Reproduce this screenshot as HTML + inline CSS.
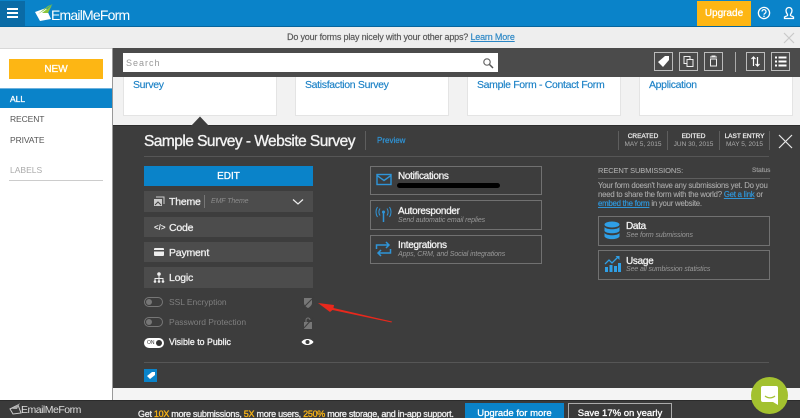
<!DOCTYPE html>
<html><head><meta charset="utf-8">
<style>
html,body{margin:0;padding:0}
body{width:800px;height:418px;overflow:hidden;position:relative;background:#fff;font-family:"Liberation Sans",sans-serif}
.a{position:absolute;white-space:nowrap}
.w{-webkit-text-stroke:.3px currentColor}
.card{position:absolute;top:77px;height:38px;background:#fff;border:1px solid #e4e4e4;border-top:none;color:#1b81c6;font-size:10.5px;letter-spacing:-.33px;line-height:14px;white-space:nowrap}
.card span{position:absolute;top:1px;left:9px;-webkit-text-stroke:.15px currentColor}
.row{position:absolute;left:144px;width:169px;background:#4c4c4c;color:#eee;font-size:10.5px;letter-spacing:-.2px}
.row b{position:absolute;left:25px;top:0;font-weight:normal;-webkit-text-stroke:.3px currentColor}
.box{position:absolute;border:1px solid #717171;box-sizing:border-box;background:#3d3d3d}
.box .t{position:absolute;color:#f2f2f2;font-size:10px;letter-spacing:-.3px;-webkit-text-stroke:.3px currentColor;white-space:nowrap}
.box .s{position:absolute;color:#999;font-size:7px;letter-spacing:-.1px;font-style:italic;white-space:nowrap}
.tb{position:absolute;top:52px;width:19px;height:19px;border:1px solid #bbb;box-sizing:border-box;background:#4a4a4a}
.hd{position:absolute;top:133px;color:#eee;font-size:6.5px;-webkit-text-stroke:.25px currentColor;text-align:center;line-height:8px}
.hd i{display:block;font-style:normal;color:#aaa;-webkit-text-stroke:0;margin-top:0}
.sep{position:absolute;background:#5e5e5e;width:1px}
</style></head><body>
<!-- top bar -->
<div class="a" style="left:0;top:0;width:800px;height:26px;background:#0a83c9;border-bottom:1px solid #07659d;box-sizing:content-box"></div>
<div class="a" style="left:0;top:1px;width:25px;height:25px;background:#0a6ba6"></div>
<div class="a" style="left:7px;top:8px;width:11px;height:2px;background:#fff"></div>
<div class="a" style="left:7px;top:12px;width:11px;height:2px;background:#fff"></div>
<div class="a" style="left:7px;top:16px;width:11px;height:2px;background:#fff"></div>
<svg class="a" style="left:34px;top:4px" width="19" height="18" viewBox="0 0 19 18"><path d="M1 8 L12 4 L17 15 L6 17 Z" fill="#fff"/><path d="M4 10 L9 7 L19 0 L14 2Z" fill="#7fc241"/><path d="M8 9 L18 1 L14 9Z" fill="#8cc63f"/></svg>
<div class="a" style="left:51px;top:6px;color:#fff;font-size:14px;letter-spacing:-.8px;line-height:18px">EmailMeForm</div>
<div class="a w" style="left:697px;top:1px;width:54px;height:25px;background:#fdb614;color:#fff;font-size:10px;text-align:center;line-height:26px">Upgrade</div>
<svg class="a" style="left:756px;top:5px" width="40" height="16" viewBox="0 0 40 16"><circle cx="8" cy="8" r="5.6" fill="none" stroke="#fff" stroke-width="1.3"/><path d="M6 6.500a2 2 0 1 1 3 1.800c-.7.4-1 .8-1 1.400" fill="none" stroke="#fff" stroke-width="1.200"/><circle cx="8" cy="11.300" r=".8" fill="#fff"/><path d="M33 2.500a3 3 0 0 1 3 3c0 2-1 3-1.500 4v1l3 1.500v1.500h-9v-1.500l3-1.500v-1c-.5-1-1.500-2-1.500-4a3 3 0 0 1 3-3z" fill="none" stroke="#fff" stroke-width="1.300"/></svg>
<!-- notice -->
<div class="a" style="left:0;top:27px;width:800px;height:21px;background:#eee;border-bottom:1px solid #d8d8d8"></div>
<div class="a" style="left:287px;top:31px;color:#555;font-size:9px;letter-spacing:-.18px;-webkit-text-stroke:.15px #555;line-height:13px">Do your forms play nicely with your other apps? <span style="color:#2a86c5;-webkit-text-stroke:.15px #2a86c5;text-decoration:underline">Learn More</span></div>
<svg class="a" style="left:783px;top:32px" width="12" height="12"><path d="M1 1L11 11M11 1L1 11" stroke="#c9c9c9" stroke-width="1.200"/></svg>
<!-- sidebar -->
<div class="a w" style="left:9px;top:59px;width:94px;height:20px;background:#fdb614;color:#fff;font-size:10px;text-align:center;line-height:21px">NEW</div>
<div class="a w" style="left:0;top:88px;width:112px;height:20px;background:#0a83c9;border-top:1px solid #6db1dd;box-sizing:border-box;color:#fff;font-size:8.500px;line-height:20px;padding-left:10px">ALL</div>
<div class="a" style="left:10px;top:113px;color:#555;font-size:8.500px;letter-spacing:-.1px;line-height:12px">RECENT</div>
<div class="a" style="left:10px;top:134px;color:#555;font-size:8.500px;letter-spacing:-.1px;line-height:12px">PRIVATE</div>
<div class="a" style="left:10px;top:164px;color:#aaa;font-size:8.500px;line-height:12px">LABELS</div>
<div class="a" style="left:9px;top:180px;width:94px;height:1px;background:#ccc"></div>
<div class="a" style="left:112px;top:48px;width:1px;height:353px;background:#999"></div>
<!-- main bg -->
<div class="a" style="left:113px;top:77px;width:687px;height:48px;background:#f2f2f2"></div>
<div class="card" style="left:123px;width:152px"><span>Survey</span></div>
<div class="card" style="left:295px;width:152px"><span>Satisfaction Survey</span></div>
<div class="card" style="left:467px;width:152px"><span>Sample Form - Contact Form</span></div>
<div class="card" style="left:639px;width:152px"><span>Application</span></div>
<!-- toolbar -->
<div class="a" style="left:113px;top:48px;width:687px;height:29px;background:#4b4b4b"></div>
<div class="a" style="left:123px;top:53px;width:375px;height:19px;background:#fff;box-sizing:border-box;color:#999;font-size:9px;letter-spacing:1px;line-height:21px;padding-left:3px">Search</div>
<svg class="a" style="left:482px;top:57px" width="12" height="12"><circle cx="5" cy="5" r="3.200" fill="none" stroke="#666" stroke-width="1.200"/><path d="M7.500 7.500L11 11" stroke="#555" stroke-width="1.500"/></svg>
<div class="tb" style="left:654px"><svg width="17" height="17"><path d="M3 9L10 3H14V7L8 14Z" fill="#fff"/></svg></div>
<div class="tb" style="left:679px"><svg width="17" height="17"><rect x="4" y="3.500" width="6" height="7" fill="none" stroke="#eee"/><rect x="7" y="6.500" width="6" height="7" fill="#4a4a4a" stroke="#eee"/></svg></div>
<div class="tb" style="left:704px"><svg width="17" height="17"><path d="M5 4h7M7 4V3h3v1M5.500 6h6v7h-6z" fill="none" stroke="#eee"/></svg></div>
<div class="a" style="left:735px;top:52px;width:1px;height:20px;background:#aaa"></div>
<div class="tb" style="left:746px"><svg width="17" height="17"><path d="M6.500 4v9M4.500 6l2-2 2 2M10.500 4v9M8.500 11l2 2 2-2" fill="none" stroke="#fff" stroke-width="1.200"/></svg></div>
<div class="tb" style="left:771px"><svg width="17" height="17"><path d="M3 4.500h2M3 8.500h2M3 12.500h2M6.500 4.500h8M6.500 8.500h8M6.500 12.500h8" stroke="#fff" stroke-width="2"/></svg></div>
<!-- dark panel -->
<div class="a" style="left:113px;top:125px;width:687px;height:263px;background:#3d3d3d;border-top:1px solid #2e2e2e;box-sizing:border-box"></div>
<svg class="a" style="left:189px;top:115px" width="22" height="11"><path d="M2 11L11 1.500L20 11Z" fill="#3d3d3d"/></svg>
<div class="a" style="left:144px;top:132px;color:#f2f2f2;font-size:15.500px;-webkit-text-stroke:.35px #f2f2f2;letter-spacing:-.54px;line-height:20px">Sample Survey - Website Survey</div>
<div class="sep" style="left:365px;top:131px;height:19px"></div>
<div class="a" style="left:377px;top:135px;color:#2f95d8;font-size:8px;-webkit-text-stroke:.2px #2f95d8;line-height:11px">Preview</div>
<div class="a" style="left:144px;top:156px;width:625px;height:1px;background:#565656"></div>
<div class="sep" style="left:618px;top:131px;height:19px"></div>
<div class="sep" style="left:667px;top:131px;height:19px"></div>
<div class="sep" style="left:719px;top:131px;height:19px"></div>
<div class="sep" style="left:769px;top:131px;height:19px"></div>
<div class="hd" style="left:619px;width:48px">CREATED<i>MAY 5, 2015</i></div>
<div class="hd" style="left:668px;width:51px">EDITED<i>JUN 30, 2015</i></div>
<div class="hd" style="left:720px;width:49px">LAST ENTRY<i>MAY 5, 2015</i></div>
<svg class="a" style="left:778px;top:134px" width="15" height="15"><path d="M1 1L14 14M14 1L1 14" stroke="#e8e8e8" stroke-width="1.200"/></svg>
<!-- left col -->
<div class="a w" style="left:144px;top:166px;width:169px;height:20px;background:#0a83c9;color:#fff;font-size:10px;text-align:center;line-height:21px">EDIT</div>
<div class="row" style="top:191px;height:21px;line-height:22px"><b>Theme</b></div>
<div class="a" style="left:204px;top:195px;width:1px;height:13px;background:#777"></div>
<div class="a" style="left:211px;top:197px;color:#8c8c8c;font-size:7px;letter-spacing:-.1px;font-style:italic;line-height:10px">EMF Theme</div>
<svg class="a" style="left:292px;top:198px" width="12" height="8"><path d="M1 1.500L6 6L11 1.500" fill="none" stroke="#eee" stroke-width="1.200"/></svg>
<div class="row" style="top:217px;height:20px;line-height:22px"><b>Code</b></div>
<div class="row" style="top:242px;height:20px;line-height:22px"><b>Payment</b></div>
<div class="row" style="top:267px;height:21px;line-height:23px"><b>Logic</b></div>
<svg class="a" style="left:153px;top:196px" width="12" height="12"><path d="M1 3h8v7H1z" fill="#ccc"/><path d="M3 1h8v7" fill="none" stroke="#ccc"/><path d="M2 9l3-3 3 3" fill="none" stroke="#444"/></svg>
<div class="a" style="left:154px;top:222px;color:#eee;font-size:8px;font-weight:bold;line-height:12px">&lt;/&gt;</div>
<svg class="a" style="left:154px;top:247px" width="11" height="10"><rect x="0" y="1" width="10" height="8" rx="1" fill="#eee"/><rect x="0" y="3" width="10" height="1.500" fill="#4c4c4c"/></svg>
<svg class="a" style="left:153px;top:272px" width="12" height="11"><circle cx="6" cy="2" r="1.800" fill="#eee"/><path d="M6 3v4M2 9V6.500h8V9M6 6.500V9" fill="none" stroke="#eee"/><circle cx="2" cy="9.500" r="1.300" fill="#eee"/><circle cx="6" cy="9.500" r="1.300" fill="#eee"/><circle cx="10" cy="9.500" r="1.300" fill="#eee"/></svg>
<!-- toggles -->
<div class="a" style="left:144px;top:297px;width:19px;height:10px;border:1px solid #777;border-radius:6px;box-sizing:border-box"></div>
<div class="a" style="left:146px;top:299px;width:6px;height:6px;border-radius:50%;background:#777"></div>
<div class="a" style="left:169px;top:296px;color:#7f7f7f;font-size:8.500px;letter-spacing:-.05px;line-height:12px">SSL Encryption</div>
<div class="a" style="left:144px;top:317px;width:19px;height:10px;border:1px solid #777;border-radius:6px;box-sizing:border-box"></div>
<div class="a" style="left:146px;top:319px;width:6px;height:6px;border-radius:50%;background:#777"></div>
<div class="a" style="left:169px;top:316px;color:#7f7f7f;font-size:8.500px;letter-spacing:-.05px;line-height:12px">Password Protection</div>
<div class="a" style="left:144px;top:338px;width:20px;height:10px;background:#fff;border-radius:6px;color:#333;font-size:5px;line-height:10px;text-indent:3px">ON</div>
<div class="a" style="left:156px;top:340px;width:6px;height:6px;border-radius:50%;background:#333"></div>
<div class="a w" style="left:169px;top:336px;color:#f2f2f2;font-size:8.800px;line-height:12px">Visible to Public</div>
<svg class="a" style="left:301px;top:296px" width="14" height="13"><path d="M3 2h8v5c0 2-2 4-4 5-2-1-4-3-4-5z" fill="#777"/><path d="M2 12L13 1" stroke="#3d3d3d"/></svg>
<svg class="a" style="left:302px;top:316px" width="12" height="14"><rect x="2" y="6" width="8" height="7" fill="#777"/><path d="M4 6V4a2 2 0 0 1 4 0" fill="none" stroke="#777"/><path d="M1 13L11 2" stroke="#3d3d3d"/></svg>
<svg class="a" style="left:301px;top:337px" width="13" height="10"><path d="M.500 5C3 1 10 1 12.500 5 10 9 3 9 .500 5z" fill="#fff"/><circle cx="6.500" cy="5" r="2" fill="#3d3d3d"/></svg>
<svg class="a" style="left:316px;top:300px" width="80" height="26"><path d="M2 3L18 5L17.500 8L76 21.500L75.500 22.500L16.500 10L14 12Z" fill="#e8281c"/></svg>
<div class="a" style="left:144px;top:362px;width:625px;height:1px;background:#565656"></div>
<div class="a" style="left:144px;top:369px;width:13px;height:13px;background:#0a83c9"></div>
<svg class="a" style="left:145px;top:370px" width="11" height="11"><path d="M2 6L7 2H10V5L5 9Z" fill="#fff"/></svg>
<!-- mid boxes -->
<div class="box" style="left:370px;top:166px;width:172px;height:29px"><div class="t" style="left:27px;top:4px">Notifications</div></div>
<div class="a" style="left:397px;top:183px;width:103px;height:5px;background:#000;border-radius:3px"></div>
<div class="box" style="left:370px;top:200px;width:172px;height:30px"><div class="t" style="left:27px;top:5px">Autoresponder</div><div class="s" style="left:27px;top:16px">Send automatic email replies</div></div>
<div class="box" style="left:370px;top:235px;width:172px;height:29px"><div class="t" style="left:27px;top:4px">Integrations</div><div class="s" style="left:27px;top:15px">Apps, CRM, and Social integrations</div></div>
<svg class="a" style="left:376px;top:173px" width="16" height="14"><rect x="1" y="1.500" width="14" height="10" fill="none" stroke="#2f95d8" stroke-width="1.400"/><path d="M1 2.500L8 7.500L15 2.500" fill="none" stroke="#2f95d8" stroke-width="1.400"/></svg>
<svg class="a" style="left:375px;top:206px" width="17" height="17"><circle cx="8.500" cy="6" r="1.500" fill="#2f95d8"/><path d="M8.500 6v10" stroke="#2f95d8" stroke-width="1.500"/><path d="M5 2.500c-1.500 2-1.500 5 0 7M12 2.500c1.500 2 1.500 5 0 7M2.500 1c-2 3-2 7 0 10M14.500 1c2 3 2 7 0 10" fill="none" stroke="#2f95d8"/></svg>
<svg class="a" style="left:375px;top:241px" width="17" height="16"><path d="M1.500 8V4h12M11 1l3 3-3 3M15.500 8v4h-12M6 9l-3 3 3 3" fill="none" stroke="#2f95d8" stroke-width="1.500"/></svg>
<!-- right col -->
<div class="a" style="left:598px;top:165px;color:#aaa;font-size:7.500px;-webkit-text-stroke:.1px #aaa;line-height:11px;letter-spacing:-.1px">RECENT SUBMISSIONS:</div>
<div class="a" style="left:752px;top:166px;color:#999;font-size:6.500px;-webkit-text-stroke:.2px #999;line-height:10px">Status</div>
<div class="a" style="left:598px;top:178px;width:172px;height:1px;background:#5e5e5e"></div>
<div class="a" style="left:598px;top:181px;color:#aaa;font-size:7.800px;-webkit-text-stroke:.1px #aaa;line-height:9px;letter-spacing:-.23px">Your form doesn't have any submissions yet. Do you<br>need to share the form with the world? <span style="color:#2f95d8;-webkit-text-stroke:.2px #2f95d8;text-decoration:underline">Get a link</span> or<br><span style="color:#2f95d8;-webkit-text-stroke:.2px #2f95d8;text-decoration:underline">embed the form</span> in your website.</div>
<div class="box" style="left:598px;top:216px;width:172px;height:30px"><div class="t" style="left:27px;top:4px">Data</div><div class="s" style="left:27px;top:15px">See form submissions</div></div>
<div class="box" style="left:598px;top:250px;width:172px;height:30px"><div class="t" style="left:27px;top:5px">Usage</div><div class="s" style="left:27px;top:15px">See all sumbission statistics</div></div>
<svg class="a" style="left:604px;top:221px" width="16" height="20"><ellipse cx="8" cy="3.500" rx="7.500" ry="3" fill="#2f9fe6"/><path d="M.500 6c2 3 13 3 15 0v4c-2 3-13 3-15 0zM.500 12c2 3 13 3 15 0v3.500c-2 3.500-13 3.500-15 0z" fill="#2f9fe6"/></svg>
<svg class="a" style="left:604px;top:255px" width="17" height="18"><rect x="1" y="12" width="3" height="5" fill="#2f9fe6"/><rect x="5.500" y="10" width="3" height="7" fill="#2f9fe6"/><rect x="10" y="11" width="3" height="6" fill="#2f9fe6"/><rect x="14" y="8" width="3" height="9" fill="#2f9fe6"/><path d="M1 9l4-4 3 3 6-6" fill="none" stroke="#2f9fe6" stroke-width="1.300"/><path d="M11.500 1h4v4z" fill="#2f9fe6"/></svg>
<!-- lower strip -->
<div class="a" style="left:113px;top:388px;width:687px;height:12px;background:#f4f4f4"></div>
<!-- bottom bar -->
<div class="a" style="left:0;top:400px;width:800px;height:18px;background:#3a3a3a;border-top:1px solid #2b2b2b;box-sizing:border-box"></div>
<svg class="a" style="left:9px;top:403px" width="13" height="12"><path d="M1 6L9 2L12 10L4 11Z" fill="none" stroke="#ccc"/><path d="M3 6L11 0L8 6Z" fill="#aaa"/></svg>
<div class="a" style="left:21px;top:404px;color:#ddd;font-size:10.500px;letter-spacing:-.5px;line-height:13px">EmailMeForm</div>
<div class="a w" style="left:138px;top:408px;color:#eee;font-size:9px;line-height:12px;letter-spacing:-.28px">Get <span style="color:#fdb614">10X</span> more submissions, <span style="color:#fdb614">5X</span> more users, <span style="color:#fdb614">250%</span> more storage, and in-app support.</div>
<div class="a w" style="left:465px;top:403px;width:99px;height:15px;overflow:hidden;background:#0a83c9;color:#fff;font-size:9.500px;text-align:center;line-height:22px">Upgrade for more</div>
<div class="a w" style="left:568px;top:403px;width:104px;height:15px;overflow:hidden;border:1px solid #aaa;border-bottom:none;box-sizing:border-box;background:#3a3a3a;color:#fff;font-size:9.500px;text-align:center;line-height:20px">Save 17% on yearly</div>
<!-- chat -->
<div class="a" style="left:751px;top:377px;width:37px;height:37px;border-radius:50%;background:#a3c12f"></div>
<svg class="a" style="left:760px;top:385px" width="20" height="22"><path d="M3 1h13a2 2 0 0 1 2 2v17l-5-3H3a2 2 0 0 1-2-2V3a2 2 0 0 1 2-2z" fill="#fff"/><path d="M5 11c3 2.500 7 2.500 10 0" fill="none" stroke="#a3c12f" stroke-width="1.200"/></svg>
</body></html>
